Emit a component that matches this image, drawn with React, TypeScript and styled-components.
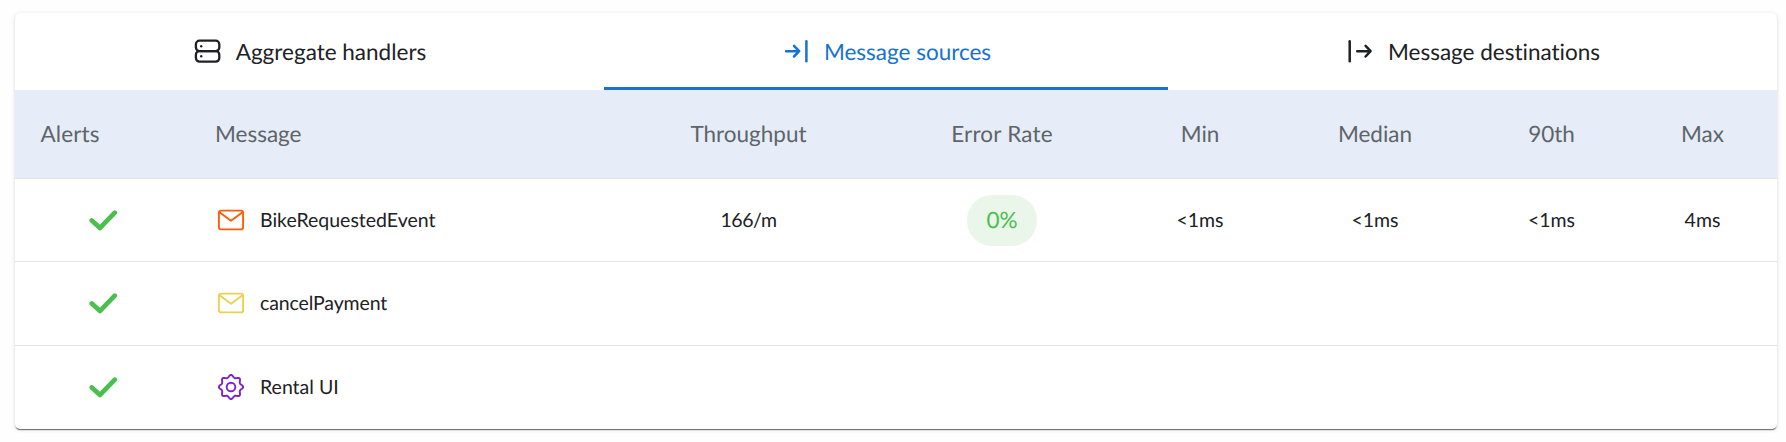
import React from 'react';
import styled, { createGlobalStyle } from 'styled-components';

const GlobalStyle = createGlobalStyle`
  * { box-sizing: border-box; }
  body {
    margin: 0;
    background: #fefefe;
    font-family: Lato, 'Liberation Sans', sans-serif;
    font-variant-ligatures: none;
    color: #202124;
    text-rendering: geometricPrecision;
  }
`;

const Card = styled.section`
  width: 1762px;
  height: 416px;
  margin: 13px 9px 13px 15px;
  background: #fff;
  border-radius: 5px;
  box-shadow:
    0 2px 1px -1px rgba(0, 0, 0, 0.46),
    0 1px 1px 0 rgba(0, 0, 0, 0.18),
    0 1px 4px 0 rgba(0, 0, 0, 0.13);
`;

const TabBar = styled.div`
  display: flex;
  height: 77px;
`;

const Tab = styled.div<{ $width: number; $active?: boolean }>`
  width: ${(p) => p.$width}px;
  display: flex;
  align-items: center;
  justify-content: center;
  gap: 15px;
  padding-left: 1px;
  font-size: 22.5px;
  line-height: 27px;
  white-space: nowrap;
  color: ${(p) => (p.$active ? '#1673d1' : '#202124')};
  box-shadow: ${(p) => (p.$active ? 'inset 0 -3px 0 #1673d1' : 'none')};
`;

const Row = styled.div<{ $height: number }>`
  display: grid;
  grid-template-columns: 176px 415px 285px 222px 174px 176px 177px 125px;
  align-items: center;
  height: ${(p) => p.$height}px;
  border-bottom: 1px solid #e2e4e6;
  font-size: 19.5px;
  line-height: 24px;

  &:last-child {
    border-bottom: none;
  }
`;

const HeaderRow = styled(Row)`
  padding-bottom: 2px;
  background: #e6edf8;
  color: #5f6469;
  font-size: 22.5px;
  line-height: 27px;
`;

const LowerRow = styled(Row)`
  padding-bottom: 1px;
`;

const Cell = styled.div<{ $tracking?: number }>`
  display: flex;
  justify-content: center;
  align-items: center;
  letter-spacing: ${(p) => p.$tracking ?? 0}px;
`;

const StatusCell = styled(Cell)`
  padding-left: 1px;
`;

const ValueCell = styled(Cell)`
  padding-top: 2px;
`;

const AlertsHeader = styled.div`
  padding-left: 25.5px;
  letter-spacing: 0.1px;
`;

const MessageHeader = styled.div`
  padding-left: 24px;
`;

const MessageCell = styled.div`
  display: flex;
  align-items: center;
  gap: 15px;
  padding-left: 26px;
`;

const Name = styled.span<{ $tracking?: number }>`
  padding-top: 2px;
  letter-spacing: ${(p) => p.$tracking ?? 0}px;
`;

const Pill = styled.span`
  padding: 11px 19px 13px;
  border-radius: 25px;
  background: #eaf6ea;
  color: #49c04b;
  font-size: 22.5px;
  line-height: 27px;
`;

const Icon = styled.svg`
  display: block;
  flex: none;
  fill: none;
  stroke: currentColor;
  stroke-linecap: round;
  stroke-linejoin: round;
`;

const ServerIcon = () => (
  <Icon width="27" height="27" viewBox="0 0 27 27" strokeWidth="2.3">
    <rect x="1.9" y="2.7" width="23.4" height="10.4" rx="3.6" />
    <rect x="1.9" y="13.1" width="23.4" height="10.6" rx="3.6" />
    <circle cx="7.2" cy="8.2" r="1.2" fill="currentColor" stroke="none" />
    <circle cx="7.2" cy="18.3" r="1.2" fill="currentColor" stroke="none" />
  </Icon>
);

const ArrowInIcon = () => (
  <Icon width="27" height="27" viewBox="0 0 27 27" strokeWidth="2.5">
    <path d="M4.1 13.2H17M12 7.9l5.2 5.3-5.2 5.3" />
    <path d="M24.4 3.2v20" />
  </Icon>
);

const ArrowOutIcon = () => (
  <Icon width="27" height="27" viewBox="0 0 27 27" strokeWidth="2.5">
    <path d="M3.7 3.2v20" />
    <path d="M11.2 13.2h13M19.6 7.9l5 5.3-5 5.3" />
  </Icon>
);

const CheckIcon = () => (
  <Icon width="30" height="24" viewBox="0 0 30 24" strokeWidth="4.7" color="#49c04b">
    <path d="M2.8 12.4l8.2 7.5L25.8 4.7" />
  </Icon>
);

const MailIcon = ({ color }: { color: string }) => (
  <Icon width="28" height="28" viewBox="0 0 28 28" strokeWidth="1.9" color={color}>
    <rect x="1.9" y="4.6" width="24.2" height="18.8" rx="2.2" />
    <path d="M2.5 6.3L14 14.7l11.5-8.4" />
  </Icon>
);

const gearOutline = Array.from({ length: 128 }, (_, i) => {
  const angle = (i / 128) * Math.PI * 2;
  const radius = 10.9 + 1.25 * Math.cos(angle * 8);
  const turn = angle - 0.02 * Math.sin(angle * 8);
  const x = 14 + radius * Math.cos(turn);
  const y = 14 + radius * Math.sin(turn);
  return `${i === 0 ? 'M' : 'L'}${x.toFixed(2)} ${y.toFixed(2)}`;
}).join('') + 'Z';

const GearIcon = () => (
  <Icon width="28" height="28" viewBox="0 0 28 28" strokeWidth="1.9" color="#7b22d3">
    <path d={gearOutline} />
    <circle cx="14" cy="14" r="4.3" />
  </Icon>
);

export default function App() {
  return (
    <>
      <GlobalStyle />
      <Card>
        <TabBar>
          <Tab $width={589}><ServerIcon />Aggregate handlers</Tab>
          <Tab $width={564} $active><ArrowInIcon />Message sources</Tab>
          <Tab $width={609}><ArrowOutIcon />Message destinations</Tab>
        </TabBar>
        <HeaderRow $height={89}>
          <AlertsHeader>Alerts</AlertsHeader>
          <MessageHeader>Message</MessageHeader>
          <Cell>Throughput</Cell>
          <Cell $tracking={0.2}>Error Rate</Cell>
          <Cell>Min</Cell>
          <Cell>Median</Cell>
          <Cell>90th</Cell>
          <Cell>Max</Cell>
        </HeaderRow>
        <Row $height={83}>
          <StatusCell><CheckIcon /></StatusCell>
          <MessageCell><MailIcon color="#ff5c0a" /><Name>BikeRequestedEvent</Name></MessageCell>
          <ValueCell $tracking={-0.4}>166/m</ValueCell>
          <Cell><Pill>0%</Pill></Cell>
          <ValueCell>&lt;1ms</ValueCell>
          <ValueCell>&lt;1ms</ValueCell>
          <ValueCell>&lt;1ms</ValueCell>
          <ValueCell>4ms</ValueCell>
        </Row>
        <LowerRow $height={84}>
          <StatusCell><CheckIcon /></StatusCell>
          <MessageCell><MailIcon color="#e8d252" /><Name $tracking={-0.12}>cancelPayment</Name></MessageCell>
        </LowerRow>
        <LowerRow $height={83}>
          <StatusCell><CheckIcon /></StatusCell>
          <MessageCell><GearIcon /><Name>Rental UI</Name></MessageCell>
        </LowerRow>
      </Card>
    </>
  );
}
